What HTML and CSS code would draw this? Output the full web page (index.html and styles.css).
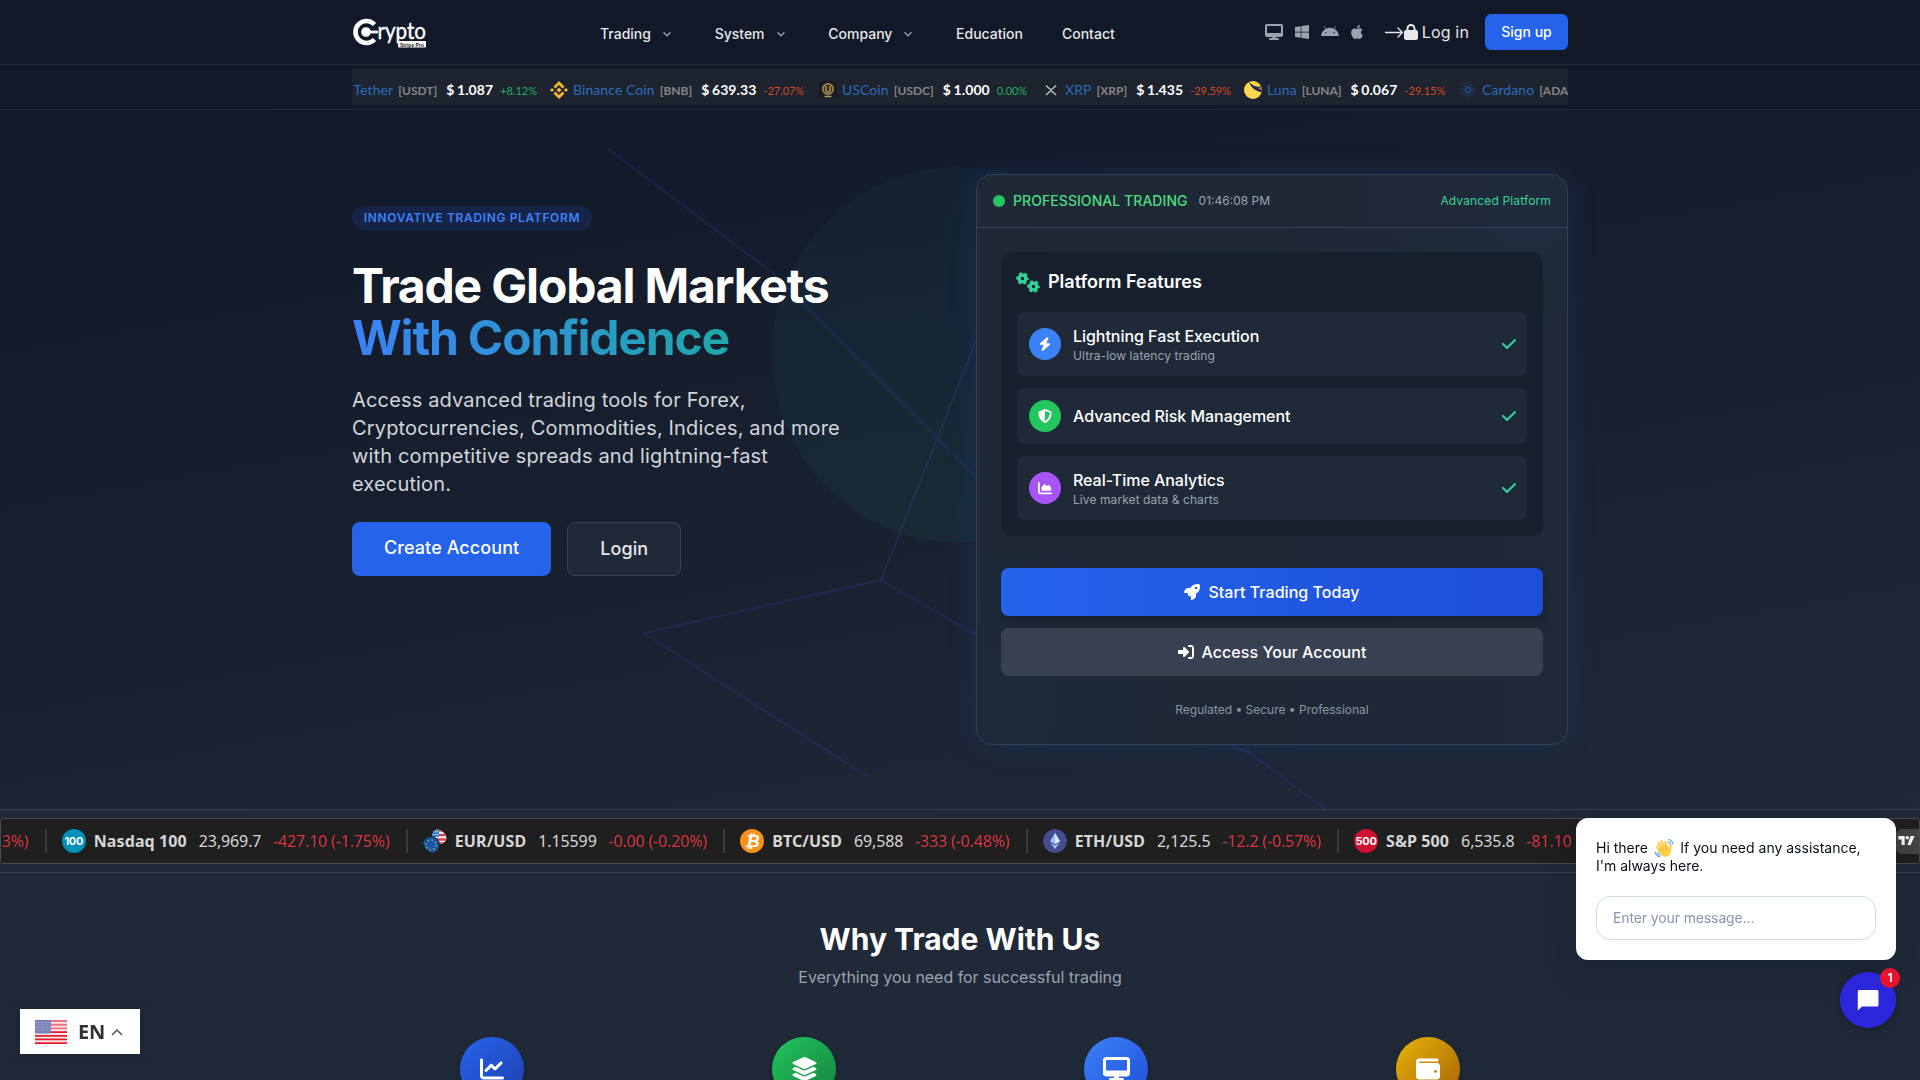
FILE: index.html
```html
<!DOCTYPE html>
<html lang="en">
<head>
    <meta charset="UTF-8">
    <meta name="viewport" content="width=device-width, initial-scale=1.0">
    <title>Crypto Stripe Pro</title>
    <link rel="stylesheet" href="styles.css">
</head>
<body>
    <!-- Shared icons -->
    <svg class="sprite" width="0" height="0">
        <symbol id="chevron" viewBox="0 0 10 10"><path d="M1.5 3.2 5 6.8 8.5 3.2" fill="none" stroke="currentColor" stroke-width="1.3"/></symbol>
        <symbol id="check" viewBox="0 0 448 512"><path d="M438.6 105.4c12.5 12.5 12.5 32.8 0 45.3l-256 256c-12.5 12.5-32.8 12.5-45.3 0l-128-128c-12.5-12.5-12.5-32.8 0-45.3s32.8-12.5 45.3 0L160 338.7 393.4 105.4c12.5-12.5 32.8-12.5 45.3 0z"/></symbol>
        <symbol id="desktop" viewBox="0 0 576 512"><path d="M64 0C28.7 0 0 28.7 0 64V352c0 35.3 28.7 64 64 64H240l-10.7 32H160c-17.7 0-32 14.3-32 32s14.3 32 32 32H416c17.7 0 32-14.3 32-32s-14.3-32-32-32H346.7L336 416H512c35.3 0 64-28.7 64-64V64c0-35.3-28.7-64-64-64H64zM512 64V288H64V64H512z"/></symbol>
        <symbol id="gear" viewBox="0 0 20 20"><circle cx="10" cy="10" r="5.2" fill="none" stroke="currentColor" stroke-width="5"/><circle cx="10" cy="10" r="8.3" fill="none" stroke="currentColor" stroke-width="2.8" stroke-dasharray="4.6 4.09" stroke-dashoffset="2.3"/></symbol>
    </svg>

    <header class="header">
        <div class="container header-row">
            <a class="logo" href="#">
                <svg width="78" height="36" viewBox="0 0 78 36">
                    <path d="M22.5 10.500A11 11 0 1 0 22.500 25.500" fill="none" stroke="#fff" stroke-width="4.600"/>
                    <circle cx="14" cy="18" r="4.800" fill="#fff"/>
                    <path d="M15 18h11" stroke="#fff" stroke-width="2.800"/>
                    <text x="25.500" y="25" class="logo-text" textLength="48.500" lengthAdjust="spacingAndGlyphs">rypto</text>
                    <rect x="46" y="27" width="28" height="6.500" rx="1" fill="#fff"/>
                    <text x="48" y="32.500" class="logo-tag" textLength="24" lengthAdjust="spacingAndGlyphs">Stripe Pro</text>
                </svg>
            </a>
            <nav class="nav">
                <a href="#">Trading <svg class="chev"><use href="#chevron"/></svg></a>
                <a href="#">System <svg class="chev"><use href="#chevron"/></svg></a>
                <a href="#">Company <svg class="chev"><use href="#chevron"/></svg></a>
                <a href="#">Education</a>
                <a href="#">Contact</a>
            </nav>
            <div class="header-right">
                <div class="platforms">
                    <svg width="18" height="16"><use href="#desktop"/></svg>
                    <svg width="14" height="16" viewBox="0 0 448 512"><path d="M0 93.700l183.600-25.300v177.400H0V93.700zm0 324.600l183.600 25.300V268.400H0v149.900zm203.800 28L448 480V268.400H203.800v177.900zm0-380.600v180.100H448V32L203.800 65.700z"/></svg>
                    <svg width="18" height="16" viewBox="0 0 576 512"><path d="M420.550,301.930a24,24,0,1,1,24-24,24,24,0,0,1-24,24m-265.100,0a24,24,0,1,1,24-24,24,24,0,0,1-24,24m273.700-144.480,47.940-83a10,10,0,1,0-17.270-10h0l-48.540,84.070a301.250,301.250,0,0,0-246.560,0L116.180,64.450a10,10,0,1,0-17.270,10h0l47.940,83C64.530,202.220,8.240,285.550,0,384H576c-8.240-98.450-64.540-181.780-146.850-226.550"/></svg>
                    <svg width="12" height="16" viewBox="0 0 384 512"><path d="M318.700 268.700c-.2-36.700 16.400-64.400 50-84.800-18.800-26.900-47.200-41.700-84.700-44.600-35.500-2.800-74.300 20.700-88.500 20.700-15 0-49.400-19.700-76.400-19.700C63.300 141.200 4 184.800 4 273.500q0 39.300 14.400 81.200c12.800 36.700 59 126.700 107.200 125.200 25.200-.6 43-17.900 75.800-17.900 31.800 0 48.300 17.900 76.400 17.900 48.600-.7 90.400-82.500 102.600-119.300-65.200-30.700-61.700-90-61.700-91.900zm-56.600-164.200c27.300-32.400 24.800-61.900 24-72.500-24.100 1.400-52 16.400-67.900 34.900-17.500 19.800-27.800 44.300-25.600 71.900 26.100 2 49.900-11.400 69.500-34.300z"/></svg>
                </div>
                <a class="login-link" href="#">
                    <svg width="19" height="16" viewBox="0 0 19 16"><path d="M0 8.500h17.500M12.500 3.500l5 5-5 5" fill="none" stroke="currentColor" stroke-width="1.300"/></svg>
                    <svg width="14" height="16" viewBox="0 0 448 512"><path d="M144 144v48H304V144c0-44.200-35.800-80-80-80s-80 35.800-80 80zM80 192V144C80 64.500 144.500 0 224 0s144 64.500 144 144v48h16c35.300 0 64 28.700 64 64V448c0 35.300-28.700 64-64 64H64c-35.300 0-64-28.700-64-64V256c0-35.300 28.700-64 64-64H80z"/></svg>
                    <span>Log in</span>
                </a>
                <a class="signup" href="#">Sign up</a>
            </div>
        </div>
    </header>

    <div class="coin-bar">
        <div class="container">
            <div class="coins">
                <div class="coin coin-tether"><a>Tether</a><small>[USDT]</small><b>$ 1.087</b><i class="up">+8.12%</i></div>
                <div class="coin coin-bnb">
                    <svg class="coin-icon" viewBox="0 0 18 18"><path d="M9 0l5.500 5.500-2 2L9 4 5.500 7.500l-2-2zM9 18l5.500-5.500-2-2L9 14l-3.500-3.500-2 2zM0 9l2-2 2 2-2 2zM14 9l2-2 2 2-2 2zM9 6.500L11.500 9 9 11.500 6.500 9z" fill="#f3ba2f"/></svg>
                    <a>Binance Coin</a><small>[BNB]</small><b>$ 639.33</b><i>-27.07%</i>
                </div>
                <div class="coin coin-usdc">
                    <svg class="coin-icon" viewBox="0 0 18 18"><path d="M0 0h18v18H0z" fill="#1c1d24"/><circle cx="9" cy="8" r="5.200" fill="#3a3120" stroke="#a58a50" stroke-width="1.600"/><path d="M7 5v4a2 2 0 0 0 4 0V5M5.500 15.500h7" fill="none" stroke="#b79a5c" stroke-width="1.300"/></svg>
                    <a>USCoin</a><small>[USDC]</small><b>$ 1.000</b><i class="up">0.00%</i>
                </div>
                <div class="coin coin-xrp">
                    <svg class="coin-icon" viewBox="0 0 18 18"><path d="M4 4.500l3.500 3.300q1.500 1.300 3 0L14 4.500M4 14l3.500-3.300q1.500-1.300 3 0L14 14" fill="none" stroke="#b9bcc2" stroke-width="1.500"/></svg>
                    <a>XRP</a><small>[XRP]</small><b>$ 1.435</b><i>-29.59%</i>
                </div>
                <div class="coin coin-luna">
                    <svg class="coin-icon" viewBox="0 0 18 18"><circle cx="9" cy="9" r="9" fill="#ffd84d"/><path d="M5 1C7 7 12 10 17.500 11.500A9 9 0 0 0 17 5C14 7 9 5 5 1z" fill="#172852"/><path d="M14 7l3 -1 .8 4z" fill="#e8682c"/></svg>
                    <a>Luna</a><small>[LUNA]</small><b>$ 0.067</b><i>-29.15%</i>
                </div>
                <div class="coin coin-ada">
                    <svg class="coin-icon" viewBox="0 0 18 18"><g fill="none" stroke="#1c4d96"><circle cx="9" cy="9" r="2.600" stroke-width="1.600"/><circle cx="9" cy="9" r="5.500" stroke-width="1.600" stroke-dasharray="1.200 2.255"/><circle cx="9" cy="9" r="8" stroke-width="1" stroke-dasharray="1 5.280"/></g></svg>
                    <a>Cardano</a><small>[ADA]</small>
                </div>
            </div>
        </div>
    </div>

    <section class="hero">
        <svg class="hero-art" width="1920" height="699" viewBox="0 110 1920 699">
            <defs>
                <linearGradient id="orb" x1="0" y1="0" x2="0" y2="1"><stop offset="0" stop-color="#2b7fd0"/><stop offset="1" stop-color="#10b981"/></linearGradient>
            </defs>
            <circle cx="959.500" cy="354.500" r="187.500" fill="url(#orb)" opacity=".055"/>
            <g fill="none" stroke="#4f46e5" stroke-width="2" opacity=".17">
                <path d="M607 148L773 273L980 481"/>
                <path d="M980 331L881 580L644 633L868 777"/>
                <path d="M881 580L980 637"/>
                <path d="M1215 740L1250 753L1326 810M1240 740L1250 753"/>
            </g>
        </svg>
        <div class="container hero-grid">
            <div class="hero-copy">
                <span class="badge">INNOVATIVE TRADING PLATFORM</span>
                <h1>Trade Global Markets <span>With Confidence</span></h1>
                <p>Access advanced trading tools for Forex, Cryptocurrencies, Commodities, Indices, and more with competitive spreads and lightning-fast execution.</p>
                <div class="hero-actions">
                    <a class="btn-create" href="#">Create Account</a>
                    <a class="btn-login" href="#">Login</a>
                </div>
            </div>

            <div class="card">
                <div class="card-head">
                    <span class="dot"></span>
                    <span class="live">PROFESSIONAL TRADING</span>
                    <span class="time">01:46:08 PM</span>
                    <span class="adv">Advanced Platform</span>
                </div>
                <div class="card-body">
                    <div class="panel">
                        <h3><span class="gears"><svg class="gear-a"><use href="#gear"/></svg><svg class="gear-b"><use href="#gear"/></svg></span>Platform Features</h3>
                        <div class="feature">
                            <span class="ficon blue"><svg width="12" height="14" viewBox="0 0 448 512"><path d="M349.400 44.600c5.900-13.700 1.500-29.700-10.600-38.500s-28.600-8-39.900 1.800l-256 224c-10 8.800-13.600 22.900-8.900 35.300S50.700 288 64 288H175.500L98.600 467.400c-5.900 13.700-1.500 29.700 10.600 38.500s28.600 8 39.900-1.800l256-224c10-8.800 13.600-22.900 8.900-35.300s-16.600-20.700-30-20.700H272.500L349.400 44.600z"/></svg></span>
                            <div><strong>Lightning Fast Execution</strong><small>Ultra-low latency trading</small></div>
                            <svg class="check"><use href="#check"/></svg>
                        </div>
                        <div class="feature">
                            <span class="ficon green"><svg width="14" height="14" viewBox="0 0 512 512"><path d="M256 0c4.600 0 9.200 1 13.400 2.900L457.700 82.800c22 9.300 38.400 31 38.300 57.200c-.5 99.200-41.300 280.700-213.600 363.200c-16.700 8-36.100 8-52.800 0C57.300 420.700 16.500 239.200 16 140c-.1-26.200 16.300-47.900 38.300-57.200L242.700 2.900C246.800 1 251.400 0 256 0zm0 66.800V444.800C394 378 431.100 230.100 432 141.400L256 66.800z"/></svg></span>
                            <div><strong>Advanced Risk Management</strong></div>
                            <svg class="check"><use href="#check"/></svg>
                        </div>
                        <div class="feature">
                            <span class="ficon purple"><svg width="14" height="14" viewBox="0 0 512 512"><path d="M64 64c0-17.700-14.300-32-32-32S0 46.300 0 64V400c0 44.200 35.800 80 80 80H480c17.700 0 32-14.300 32-32s-14.300-32-32-32H80c-8.800 0-16-7.200-16-16V64zm96 288H448c17.700 0 32-14.300 32-32V251.800c0-7.600-2.700-15-7.700-20.800l-65.800-76.800c-12.100-14.200-33.700-15-46.900-1.800l-21 21c-10 10-26.400 9.200-35.400-1.600l-39.200-47c-12.600-15.100-35.700-15.400-48.700-.6L135.900 215c-5.100 5.800-7.900 13.300-7.900 21.100v84c0 17.700 14.300 32 32 32z"/></svg></span>
                            <div><strong>Real-Time Analytics</strong><small>Live market data &amp; charts</small></div>
                            <svg class="check"><use href="#check"/></svg>
                        </div>
                    </div>
                    <a class="wide-btn primary" href="#"><svg width="16" height="16" viewBox="0 0 512 512"><path d="M156.600 384.900L125.700 354c-8.500-8.500-11.500-20.800-7.700-32.200c3-8.900 7-20.500 11.800-33.800L24 288c-8.600 0-16.600-4.600-20.900-12.100s-4.200-16.700 .2-24.100l52.500-88.500c13-21.900 36.500-35.300 61.900-35.300l82.300 0c2.400-4 4.800-7.700 7.200-11.300C289.100-4.100 411.100-8.100 483.900 5.300c11.600 2.100 20.600 11.200 22.800 22.800c13.400 72.900 9.300 194.800-111.400 276.700c-3.500 2.400-7.300 4.800-11.300 7.200v82.300c0 25.400-13.400 49-35.300 61.900l-88.500 52.500c-7.400 4.400-16.600 4.500-24.100 .2s-12.100-12.200-12.100-20.900V380.800c-14.100 4.900-26.400 8.900-35.700 11.900c-11.200 3.600-23.400 .5-31.800-7.800zM384 168a40 40 0 1 0 0-80 40 40 0 1 0 0 80z"/></svg>Start Trading Today</a>
                    <a class="wide-btn" href="#"><svg width="16" height="16" viewBox="0 0 512 512"><path d="M217.900 105.900L340.700 228.700c7.200 7.200 11.300 17.100 11.300 27.300s-4.100 20.100-11.300 27.300L217.900 406.100c-6.400 6.400-15 9.900-24 9.900c-18.700 0-33.900-15.200-33.900-33.900l0-62.100L32 320c-17.700 0-32-14.300-32-32l0-64c0-17.700 14.300-32 32-32l128 0 0-62.100c0-18.700 15.200-33.900 33.900-33.900c9 0 17.600 3.600 24 9.900zM352 416l64 0c17.700 0 32-14.300 32-32l0-256c0-17.700-14.300-32-32-32l-64 0c-17.700 0-32-14.300-32-32s14.300-32 32-32l64 0c53 0 96 43 96 96l0 256c0 53-43 96-96 96l-64 0c-17.700 0-32-14.300-32-32s14.300-32 32-32z"/></svg>Access Your Account</a>
                    <p class="note">Regulated • Secure • Professional</p>
                </div>
            </div>
        </div>
    </section>

    <div class="market-bar">
        <div class="tape">
            <div class="quote first"><span class="chg">3%)</span></div>
            <div class="quote"><span class="qlogo nasdaq">100</span><b>Nasdaq 100</b><span>23,969.7</span><span class="chg">-427.10 (-1.75%)</span></div>
            <div class="quote">
                <svg class="qlogo" viewBox="0 0 24 24">
                    <defs><clipPath id="us"><circle cx="16.500" cy="7.500" r="7.500"/></clipPath></defs>
                    <g clip-path="url(#us)"><path d="M9 0h15v15H9z" fill="#fff"/><path d="M9 1.500h15M9 6h15M9 10.500h15M9 14.500h15" stroke="#e0424b" stroke-width="2.300"/><path d="M9 0h7v8H9z" fill="#3b86e0"/><path d="M10 2.500h6M10 5.500h6" stroke="#bcd8f6" stroke-dasharray="1 1"/></g>
                    <circle cx="8" cy="16" r="9" fill="#1f1f1f"/><circle cx="8" cy="16" r="8" fill="#1656a8"/>
                    <circle cx="8" cy="16" r="5" fill="none" stroke="#ffd21c" stroke-width="1.200" stroke-dasharray="1.200 2.727"/>
                </svg>
                <b>EUR/USD</b><span>1.15599</span><span class="chg">-0.00 (-0.20%)</span>
            </div>
            <div class="quote"><span class="qlogo btc">₿</span><b>BTC/USD</b><span>69,588</span><span class="chg">-333 (-0.48%)</span></div>
            <div class="quote">
                <svg class="qlogo" viewBox="0 0 24 24"><circle cx="12" cy="12" r="12" fill="#434e8f"/><path d="M12 4l5 8.300-5 2.900-5-2.900z" fill="#a9baf5"/><path d="M12 4v11.200l5-2.900z" fill="#dfe7ff"/><path d="M7 13.500l5 6.500 5-6.500-5 2.900z" fill="#a9baf5"/></svg>
                <b>ETH/USD</b><span>2,125.5</span><span class="chg">-12.2 (-0.57%)</span>
            </div>
            <div class="quote"><span class="qlogo sp">500</span><b>S&amp;P 500</b><span>6,535.8</span><span class="chg">-81.10 (</span></div>
            <div class="tv"><svg width="17" height="9" viewBox="0 0 18 10"><path d="M0 0h7v10H3.500V4H0zM13.500 0H18l-4.500 10H10z"/><circle cx="9.800" cy="1.900" r="1.900"/></svg></div>
        </div>
    </div>

    <section class="why">
        <h2>Why Trade With Us</h2>
        <p>Everything you need for successful trading</p>
        <div class="container why-grid">
            <div class="bubble b1"><svg width="24" height="24" viewBox="0 0 512 512"><path d="M64 64c0-17.700-14.300-32-32-32S0 46.300 0 64V400c0 44.200 35.800 80 80 80H480c17.700 0 32-14.300 32-32s-14.300-32-32-32H80c-8.800 0-16-7.200-16-16V64zm406.600 86.600c12.500-12.500 12.500-32.800 0-45.300s-32.800-12.500-45.300 0L320 210.700l-57.400-57.400c-12.500-12.500-32.800-12.500-45.300 0l-112 112c-12.500 12.500-12.500 32.800 0 45.300s32.800 12.500 45.300 0L240 221.300l57.400 57.400c12.500 12.500 32.800 12.500 45.300 0l128-128z"/></svg></div>
            <div class="bubble b2"><svg width="27" height="24" viewBox="0 0 576 512"><path d="M264.500 5.200c14.900-6.900 32.100-6.900 47 0l218.600 101c8.500 3.900 13.900 12.400 13.900 21.800s-5.400 17.900-13.900 21.800l-218.600 101c-14.900 6.900-32.100 6.900-47 0L45.900 149.800C37.400 145.800 32 137.300 32 128s5.400-17.900 13.900-21.800L264.500 5.200zM476.900 209.600l53.200 24.600c8.500 3.900 13.900 12.400 13.900 21.800s-5.400 17.900-13.900 21.800l-218.600 101c-14.900 6.900-32.100 6.900-47 0L45.900 277.800C37.400 273.800 32 265.300 32 256s5.400-17.900 13.900-21.800l53.200-24.600 152 70.200c23.400 10.800 50.400 10.800 73.800 0l152-70.200zm-152 198.200l152-70.200 53.200 24.600c8.500 3.900 13.900 12.400 13.900 21.800s-5.400 17.900-13.900 21.800l-218.600 101c-14.900 6.900-32.100 6.900-47 0L45.900 405.800C37.400 401.800 32 393.300 32 384s5.400-17.900 13.900-21.800l53.200-24.600 152 70.200c23.400 10.800 50.400 10.800 73.800 0z"/></svg></div>
            <div class="bubble b3"><svg width="27" height="24"><use href="#desktop"/></svg></div>
            <div class="bubble b4"><svg width="24" height="24" viewBox="0 0 512 512"><path d="M64 32C28.700 32 0 60.700 0 96V416c0 35.300 28.700 64 64 64H448c35.300 0 64-28.700 64-64V192c0-35.300-28.700-64-64-64H80c-8.800 0-16-7.200-16-16s7.200-16 16-16H448c17.700 0 32-14.300 32-32s-14.300-32-32-32H64zM416 272a32 32 0 1 1 0 64 32 32 0 1 1 0-64z"/></svg></div>
        </div>
    </section>

    <!-- Floating widgets -->
    <div class="lang">
        <svg width="32" height="24" viewBox="0 0 32 24">
            <path d="M0 0h32v24H0z" fill="#fbe9eb"/>
            <path d="M0 1h32M0 4.700h32M0 8.400h32" stroke="#f0707c" stroke-width="1.850"/>
            <path d="M0 12.100h32M0 15.800h32M0 19.400h32M0 23.100h32" stroke="#e01b2b" stroke-width="1.850"/>
            <path d="M0 0h16v13.500H0z" fill="#7d7fb8"/>
            <path d="M1 2.500h14M2 5h13M1 7.500h14M2 10h13" stroke="#c3c4e2" stroke-width="1" stroke-dasharray="1 1.500"/>
        </svg>
        <span>EN</span>
        <svg width="12" height="8" viewBox="0 0 12 8"><path d="M1 7l5-5 5 5" fill="none" stroke="#555" stroke-width="1.500"/></svg>
    </div>

    <div class="chat">
        <p>Hi there <svg class="wave" viewBox="0 0 20 20"><g fill="none" stroke="#58a6e8" stroke-width="1.200" stroke-linecap="round"><path d="M14 1.500q3.500 .5 4.500 4.500M13.500 3.800q2 .5 2.800 2.800M.8 14q.5 4 4.500 4.800M3 14.500q.5 2 2.500 2.800"/></g><path d="M6.500 17Q3 13 1.500 9q.5-1.800 2-.8L5 10.500 2.800 5Q3.500 3 5 4.300L7.500 9 5.500 3Q6.500 1.200 8 2.700L10.500 8 9.500 3.500Q10.500 2.300 11.700 3.700L14 9.500 15.300 7Q17.300 6 17.200 8.500L16.500 14Q15 19 10.500 18.800 8 18.700 6.500 17z" fill="#ffcf4b"/><path d="M5 10.500l3 3.500M7.500 9l2.500 3.500M10.500 8l1.800 3.500" stroke="#e59a2a" stroke-width=".7"/></svg> If you need any assistance, I'm always here.</p>
        <input type="text" placeholder="Enter your message...">
    </div>
    <div class="chat-fab">
        <svg width="22" height="22" viewBox="0 0 22 22"><path d="M2 1h18a1.500 1.500 0 0 1 1.500 1.500V16a1.500 1.500 0 0 1-1.500 1.500H5L.8 21.500V2.500A1.500 1.500 0 0 1 2 1z" fill="#fff"/></svg>
        <span class="fab-badge">1</span>
    </div>
</body>
</html>
```
FILE: styles.css
```css
* { box-sizing: border-box; margin: 0; padding: 0; }
body { height: 1080px; overflow: hidden; background: #111827; color: #fff; font-family: Inter, sans-serif; font-size: 16px; line-height: 24px; }
a { color: inherit; text-decoration: none; }
svg { display: block; fill: currentColor; flex: none; }
.sprite { position: absolute; }
.container { width: 1216px; margin: 0 auto; }

/* Header */
.header { height: 65px; border-bottom: 1px solid #1f2937; }
.header-row { display: flex; height: 64px; align-items: center; }
.logo { width: 248px; }
.logo-text { font: 400 24px Lato, sans-serif; stroke: #fff; stroke-width: .4px; }
.logo-tag { font: 700 6px "Liberation Sans", sans-serif; fill: #222; }
.nav { display: flex; gap: 40px; padding-top: 4px; font-size: 14px; font-weight: 500; line-height: 20px; color: #e5e7eb; }
.nav a { display: flex; align-items: center; }
.nav a:last-child { margin-left: -1px; }
.chev { width: 10px; height: 10px; margin: 0 2.7px 0 11px; color: #9ca3af; }
.header-right { display: flex; align-items: center; margin-left: auto; height: 36px; }
.platforms { display: flex; gap: 12px; color: #9ca3af; }
.login-link { display: flex; align-items: center; margin: 0 16px 0 22px; color: #e5e7eb; }
.login-link span { margin-left: 4px; letter-spacing: .15px; }
.signup { width: 83px; height: 36px; border-radius: 6px; background: #2563eb; font-size: 14px; font-weight: 500; line-height: 36px; text-align: center; }

/* Coin ticker */
.coin-bar { height: 45px; padding-top: 4px; border-bottom: 1px solid #1f2937; }
.coins { display: flex; height: 36px; padding-left: 1.5px; align-items: center; overflow: hidden; background: #1e2330; font-family: Lato, sans-serif; white-space: nowrap; }
.coin { display: flex; align-items: baseline; flex: none; padding-top: 6px; }
.coin-tether { width: 196px; }
.coin-bnb { width: 269px; }
.coin-usdc { width: 223px; }
.coin-xrp { width: 202px; }
.coin-luna { width: 215px; }
.coin-icon { width: 18px; height: 18px; margin-right: 5.5px; align-self: center; }
.coin a { font-size: 14px; letter-spacing: .08px; color: #2a6cbb; }
.coin small { margin-left: 5px; font-size: 12px; font-weight: 700; color: #858585; }
.coin b { margin-left: 9px; font-size: 14px; word-spacing: -1px; letter-spacing: .1px; }
.coin i { margin-left: 7px; font-size: 11px; font-style: normal; letter-spacing: -.05px; color: #d2491f; }
.coin i.up { color: #1fae5c; }

/* Hero */
.hero { position: relative; height: 699px; background: linear-gradient(170deg, #111827, #1f2937); }
.hero-art { position: absolute; left: 0; top: 0; }
.hero-grid { position: relative; display: grid; grid-template-columns: 592px 592px; gap: 32px; padding-top: 64px; }
.hero-copy { padding-top: 32px; }
.badge { display: block; width: 240px; height: 24px; border-radius: 12px; background: #172449; color: #3b82f6; font-size: 12px; font-weight: 600; line-height: 24px; letter-spacing: .64px; text-align: center; white-space: nowrap; }
.hero h1 { margin-top: 30px; font-size: 48px; font-weight: 700; line-height: 52px; letter-spacing: -1.18px; }
.hero h1 span { display: block; width: 494px; color: transparent; background: linear-gradient(to right, #3b82f6, #1fa8a8 78%); background-clip: text; -webkit-background-clip: text; }
.hero-copy p { width: 500px; margin-top: 22px; font-size: 20px; line-height: 28px; letter-spacing: .16px; color: #d1d5db; }
.hero-actions { display: flex; gap: 16px; margin-top: 24px; font-size: 18px; font-weight: 500; line-height: 28px; letter-spacing: .08px; }
.btn-create { height: 54px; padding: 12px 32px; border-radius: 8px; background: #2563eb; }
.btn-login { height: 54px; padding: 12px 32px; border: 1px solid #374151; border-radius: 8px; background: #1f2937; color: #e5e7eb; }

.card { height: 571px; border: 1px solid #334155; border-radius: 16px; overflow: hidden; background: radial-gradient(circle at 92% 4%, rgba(37, 99, 235, .06), transparent 160px), radial-gradient(circle at 4% 92%, rgba(37, 99, 235, .04), transparent 170px), linear-gradient(to right, #1d2834, #1f2937); box-shadow: 0 0 30px rgba(37, 99, 235, .16); }
.card-head { display: flex; height: 53px; padding: 0 16px; align-items: center; border-bottom: 1px solid #374151; font-size: 12px; background: #1f293799; }
.dot { width: 12px; height: 12px; margin-right: 8px; border-radius: 50%; background: #22c55e; }
.live { font-size: 14px; font-weight: 500; letter-spacing: .06px; color: #4ade80; }
.time { margin-left: 11px; color: #9ca3af; }
.adv { margin-left: auto; letter-spacing: .14px; color: #34d399; }
.card-body { padding: 24px; }
.panel { height: 284px; padding: 16px; border-radius: 12px; background: #171f2d; }
.panel h3 { display: flex; align-items: center; height: 28px; margin-bottom: 16px; font-size: 18px; font-weight: 600; }
.gears { position: relative; width: 22px; height: 18px; margin-right: 9px; color: #34d399; }
.gear-a, .gear-b { position: absolute; width: 13px; height: 13px; }
.gear-a { left: -1px; top: -1px; }
.gear-b { right: -1px; bottom: -2px; }
.feature { display: flex; align-items: center; margin-bottom: 12px; padding: 12px; border-radius: 8px; background: #1f2937; }
.ficon { display: flex; width: 32px; height: 32px; margin-right: 12px; align-items: center; justify-content: center; border-radius: 50%; }
.blue { background: #3b82f6; }
.green { background: #22c55e; }
.purple { background: #a855f7; }
.feature strong { display: block; font-weight: 500; letter-spacing: -.04px; }
.feature small { display: block; font-size: 12px; line-height: 16px; letter-spacing: .08px; color: #9ca3af; }
.check { width: 14px; height: 16px; margin: 0 -1px 0 auto; color: #34d399; }
.wide-btn { display: flex; height: 48px; margin-bottom: 12px; align-items: center; justify-content: center; gap: 8px; border-radius: 8px; background: #384152; font-weight: 500; letter-spacing: .04px; }
.wide-btn.primary { margin-top: 32px; background: linear-gradient(to right, #2563eb, #1d4ed8); box-shadow: 0 6px 12px rgba(0, 0, 0, .2); }
.note { margin-top: 26px; font-size: 12px; line-height: 16px; text-align: center; color: #8d95a3; }

/* Market tape */
.market-bar { height: 64px; padding-top: 8px; border-top: 1px solid #374151; border-bottom: 1px solid #374151; background: #1f2937; }
.tape { position: relative; display: flex; height: 46px; align-items: center; overflow: hidden; border: 1px solid #4a4a4a; border-radius: 3px; background: #1f1f1f; color: #d6d6d6; font: 16px/24px "Noto Sans", sans-serif; white-space: nowrap; }
.quote { display: flex; flex: none; height: 24px; padding: 0 16px 0 15px; align-items: center; border-left: 2px solid #3a3a3a; }
.quote.first { padding-left: 1px; border-left: 0; }
.quote b + span { margin-left: 12px; letter-spacing: -.12px; }
.quote b { font-weight: 700; letter-spacing: .1px; }
.quote .chg { letter-spacing: -.17px; color: #f23645; opacity: .9; }
.quote span + .chg { margin-left: 12px; }
.quote .qlogo { width: 24px; height: 24px; margin-right: 8px; border-radius: 50%; color: #fff; text-align: center; }
.nasdaq, .sp { font: 700 11px/24px Inter, sans-serif; letter-spacing: -.3px; }
.nasdaq { background: #0090ba; }
.sp { background: #cc1230; }
.btc { background: #f7931a; font: italic 700 17px/24px "DejaVu Sans", sans-serif; }
.tv { position: absolute; right: 0; top: 10px; width: 24px; height: 25px; padding: 7px 0 0 3px; border-radius: 8px 0 0 8px; background: #434343; color: #fff; }

/* Why section */
.why { height: 207px; padding-top: 46px; overflow: hidden; background: #1f2937; text-align: center; }
.why h2 { font-size: 30px; font-weight: 700; line-height: 40px; }
.why p { margin-top: 6px; letter-spacing: -.04px; color: #9ca3af; }
.why-grid { display: grid; grid-template-columns: repeat(4, 280px); gap: 32px; justify-items: center; margin-top: 48px; }
.bubble { display: flex; width: 64px; height: 64px; align-items: center; justify-content: center; border-radius: 50%; box-shadow: 0 6px 10px rgba(0, 0, 0, .15); }
.b1 { background: linear-gradient(135deg, #2563eb, #1e40af); }
.b2 { background: linear-gradient(135deg, #22c55e, #15803d); }
.b3 { background: linear-gradient(135deg, #3b82f6, #1d4ed8); }
.b4 { background: linear-gradient(135deg, #eab308, #a16207); }

/* Floating widgets */
.lang { position: fixed; left: 20px; top: 1009px; display: flex; width: 120px; height: 45px; padding-left: 15px; align-items: center; background: #fff; box-shadow: 0 0 10px rgba(0, 0, 0, .25); color: #333; font: 700 20px "Open Sans", sans-serif; }
.lang span { margin: 0 6.5px 0 11px; letter-spacing: -.3px; }
.chat { position: fixed; left: 1576px; top: 818px; width: 320px; height: 142px; padding: 20px; border-radius: 12px; background: #fff; box-shadow: 0 8px 32px rgba(0, 20, 30, .25); color: #080f1a; font-size: 14px; line-height: 18px; }
.chat p { height: 38px; padding-top: 1px; }
.wave { display: inline-block; position: relative; top: -2px; width: 21px; height: 20px; margin: -3px 1.5px -4px 2px; vertical-align: middle; }
.chat input { display: block; width: 280px; height: 44px; margin-top: 20px; padding: 0 16px 2px; border: 1px solid #d3dbe5; border-radius: 14px; background: #fff; font: 14px Inter, sans-serif; letter-spacing: -.12px; }
.chat input::placeholder { color: #8796af; }
.chat-fab { position: fixed; left: 1840px; top: 972px; display: flex; width: 56px; height: 56px; align-items: center; justify-content: center; border-radius: 50%; background: #2a27da; box-shadow: 0 2px 8px rgba(0, 0, 0, .25); }
.fab-badge { position: absolute; right: -4px; top: -4px; width: 20px; height: 20px; border-radius: 50%; background: #e8132f; font-size: 12px; font-weight: 600; line-height: 20px; text-align: center; }
```
